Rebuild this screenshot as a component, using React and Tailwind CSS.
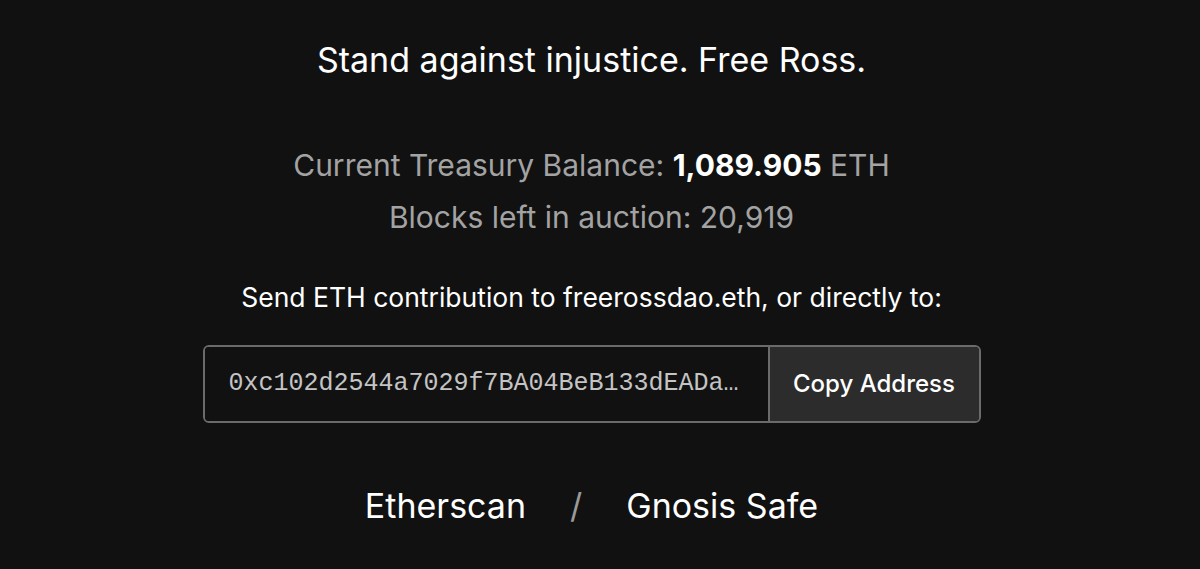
import React from "react";

const App = () => {
  return (
    <div
      className="min-h-[569px] w-full bg-[#111111] text-white flex flex-col items-center pr-[17px]"
      style={{ fontFamily: "Inter, 'Noto Sans', sans-serif" }}
    >
      <h1 className="mt-[38px] text-[34px] leading-[44px] font-normal text-white">
        Stand against injustice. Free Ross.
      </h1>

      <div className="mt-[57px] flex flex-col items-center text-[30px] leading-[52px] text-[#a3a3a3]">
        <p>
          Current Treasury Balance: <span className="font-bold text-white">1,089.905</span> ETH
        </p>
        <p>Blocks left in auction: 20,919</p>
      </div>

      <p className="mt-[37px] text-[26.5px] leading-[34px] text-white">
        Send ETH contribution to freerossdao.eth, or directly to:
      </p>

      <div className="mt-[31px] flex w-[778px] h-[78px] rounded-[6px] border-2 border-[#6b6b6b] overflow-hidden">
        <div
          className="flex-1 min-w-0 flex items-center pl-[24px] pr-[20px] text-[25px] text-[#c4c4c4] bg-[#111111]"
          style={{ fontFamily: "'Liberation Mono', 'Courier New', monospace" }}
        >
          <span className="truncate">0xc102d2544a7029f7BA04BeB133dEADa08C5bbc5B</span>
        </div>
        <button className="w-[211px] shrink-0 border-l-2 border-[#6b6b6b] bg-[#2c2c2c] text-[24px] text-white font-medium">
          Copy Address
        </button>
      </div>

      <div className="mt-[61px] flex items-center text-[34px] leading-[44px] text-white">
        <a href="#" className="font-normal">Etherscan</a>
        <span className="mx-[44px] text-[#9a9a9a]">/</span>
        <a href="#" className="font-normal">Gnosis Safe</a>
      </div>
    </div>
  );
};

export default App;
